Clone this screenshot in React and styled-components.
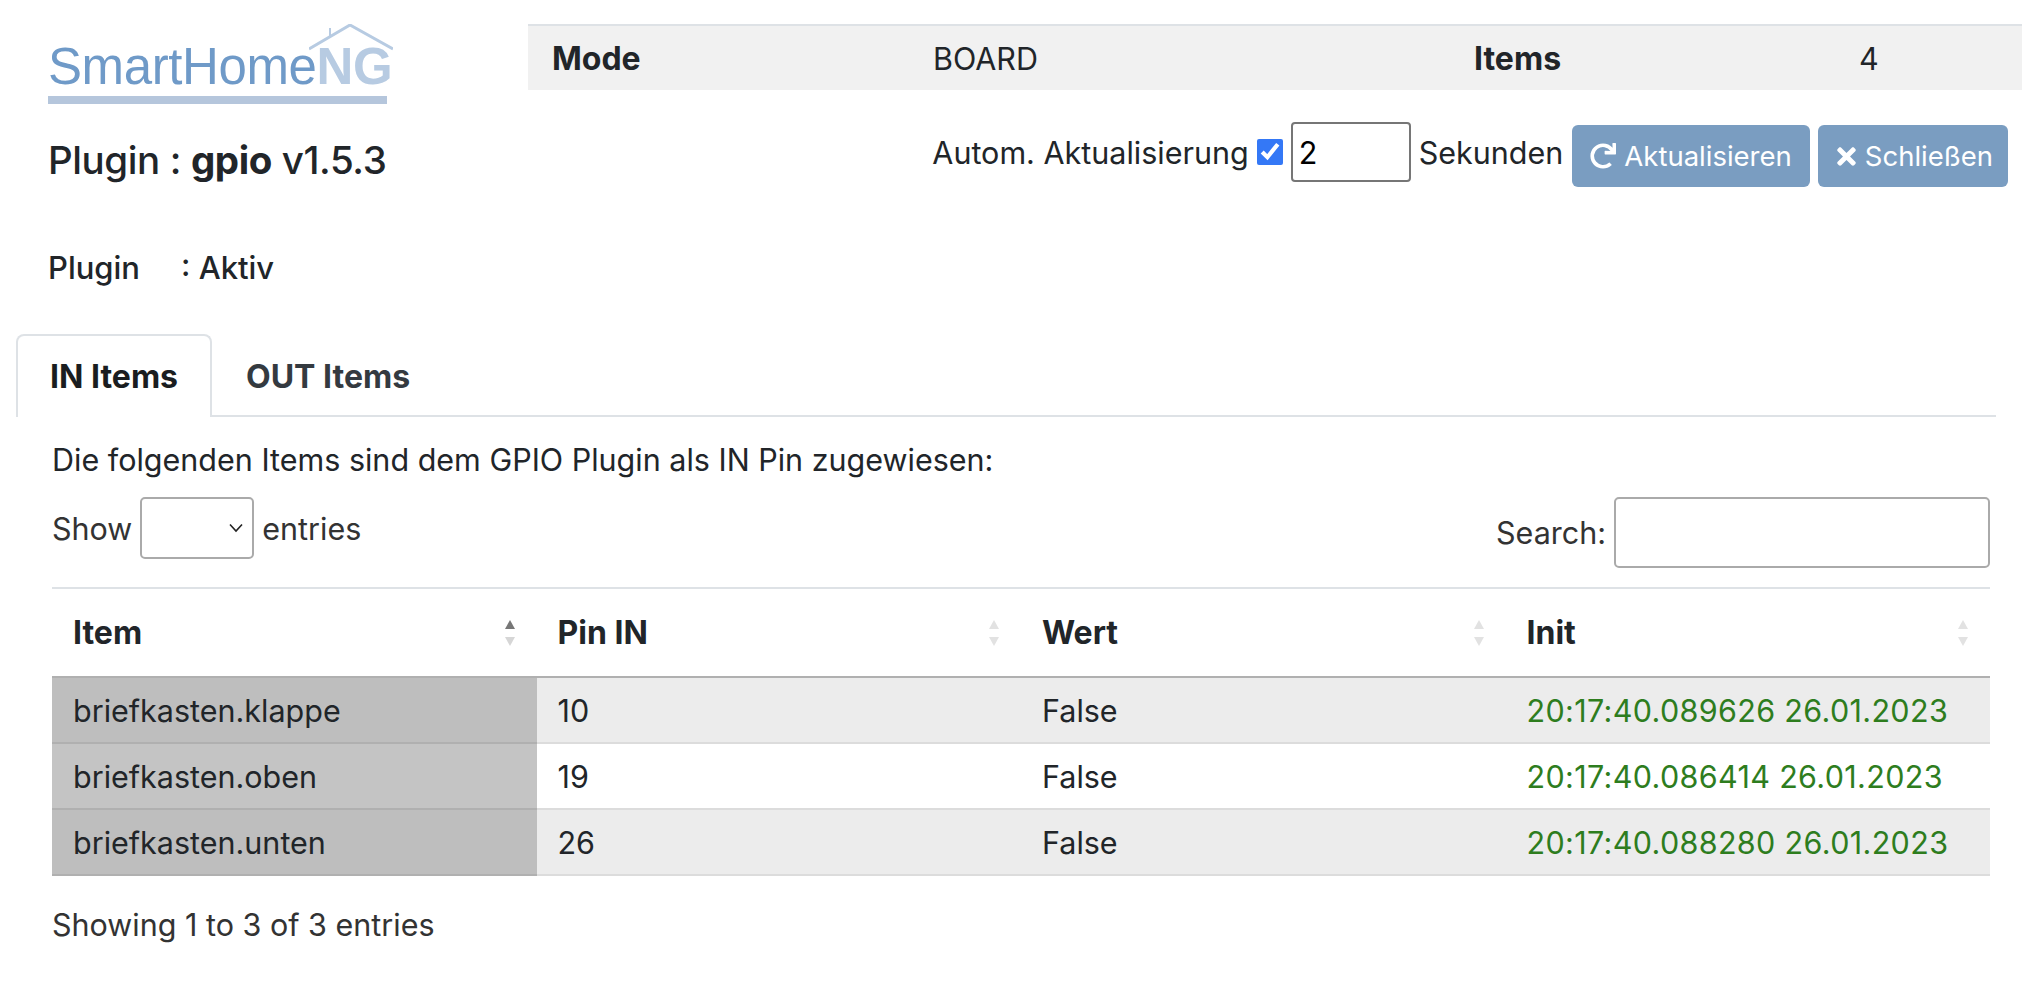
import styled, { createGlobalStyle } from "styled-components";
import { FaRedo, FaTimes } from "react-icons/fa";

const GlobalStyle = createGlobalStyle`
  html, body {
    margin: 0;
    background: #fff;
  }
  body {
    font-family: Inter, "Liberation Sans", sans-serif;
    font-size: 30.5px;
    color: #212529;
  }
`;

const Page = styled.div`
  width: 2022px;
  height: 984px;
  overflow: hidden;
`;

const Header = styled.div`
  display: grid;
  grid-template-columns: 528px 1fr;
  padding-top: 24px;
`;

const Brand = styled.div`
  padding-left: 48px;
`;

const Logo = styled.div`
  position: relative;
  width: 345px;
  height: 80px;
  filter: blur(0.6px);
`;

const LogoText = styled.div`
  padding-top: 17px;
  font-family: "Liberation Sans", sans-serif;
  font-size: 51px;
  line-height: 51px;
  letter-spacing: -0.4px;
  color: #6f9ac8;
  white-space: nowrap;

  span {
    color: #b7cbe2;
    font-weight: 700;
  }
`;

const LogoBar = styled.div`
  width: 339px;
  height: 8px;
  margin-top: 4px;
  background: #b5c6dc;
`;

const LogoRoof = styled.svg`
  position: absolute;
  right: 0;
  top: 0;
`;

const PluginTitle = styled.h1`
  margin: 33px 0 0;
  font-size: 38.5px;
  font-weight: 500;
  line-height: 46px;
  letter-spacing: -0.4px;

  b {
    font-weight: 700;
  }
`;

const InfoTable = styled.div`
  display: grid;
  grid-template-columns: 381px 541px 385px 1fr;
  height: 64px;
  align-items: center;
  padding-left: 24px;
  background: #f1f1f1;
  border-top: 2px solid #dee2e6;
`;

const InfoCell = styled.div`
  font-weight: ${({ $bold }) => ($bold ? 700 : 400)};
  font-size: ${({ $bold }) => ($bold ? "32px" : "inherit")};
`;

const Controls = styled.div`
  display: flex;
  align-items: center;
  justify-content: flex-end;
  gap: 8px;
  height: 60px;
  margin-top: 32px;
  padding-right: 14px;
`;

const AutoCheck = styled.input`
  width: 26px;
  height: 26px;
  margin: 0;
  accent-color: #3478f6;
`;

const SecondsInput = styled.input`
  box-sizing: border-box;
  width: 120px;
  height: 60px;
  padding: 0 6px;
  border: 2px solid #767676;
  border-radius: 4px;
  font: 400 30.5px Inter, sans-serif;
  color: #000;
`;

const ActionButton = styled.button`
  display: flex;
  align-items: center;
  gap: ${({ $compact }) => ($compact ? "5px" : "8px")};
  height: 62px;
  margin-top: 8px;
  margin-left: ${({ $compact }) => ($compact ? "0" : "1px")};
  padding: 0 ${({ $compact }) => ($compact ? "15px" : "18px")};
  border: none;
  border-radius: 6px;
  background: #7a9dc1;
  color: #fff;
  font: 400 27.5px Inter, sans-serif;
`;

const StatusRow = styled.div`
  display: grid;
  grid-template-columns: 133px 1fr;
  padding: 63px 0 0 48px;
  font-size: 31px;
  line-height: 44px;
  font-weight: 500;
`;

const Tabs = styled.div`
  display: flex;
  width: 1980px;
  height: 83px;
  margin: 44px 0 0 16px;
  border-bottom: 2px solid #dee2e6;
  box-sizing: border-box;
`;

const Tab = styled.div`
  box-sizing: border-box;
  display: flex;
  align-items: center;
  height: 83px;
  padding: 0 32px;
  font-size: 32px;
  font-weight: 700;
  color: ${({ $active }) => ($active ? "#1a1d20" : "#343a40")};
  background: ${({ $active }) => ($active ? "#fff" : "transparent")};
  border: 2px solid ${({ $active }) => ($active ? "#dee2e6" : "transparent")};
  border-bottom: none;
  border-radius: 8px 8px 0 0;
`;

const TabPane = styled.div`
  width: 1938px;
  margin-left: 52px;
`;

const Lead = styled.p`
  margin: 0;
  padding-top: 21px;
  line-height: 44px;
`;

const TableTools = styled.div`
  display: flex;
  justify-content: space-between;
  margin-top: 15px;
  height: 90px;
  color: #333;
`;

const ToolGroup = styled.label`
  display: flex;
  align-items: center;
  gap: 8px;
  height: ${({ $tall }) => ($tall ? "71px" : "62px")};
`;

const LengthSelect = styled.div`
  box-sizing: border-box;
  display: flex;
  align-items: center;
  justify-content: flex-end;
  width: 114px;
  height: 62px;
  padding-right: 8px;
  border: 2px solid #aaa;
  border-radius: 5px;
`;

const SearchBox = styled.input`
  box-sizing: border-box;
  width: 376px;
  height: 71px;
  border: 2px solid #aaa;
  border-radius: 5px;
`;

const DataTable = styled.table`
  width: 100%;
  table-layout: fixed;
  border-collapse: collapse;
  border-top: 2px solid #dee2e6;
`;

const HeadCell = styled.th`
  height: 87px;
  padding: 0 21px;
  text-align: left;
  font-size: 32px;
  font-weight: 700;
  border-bottom: 2px solid #b0b0b0;
`;

const HeadInner = styled.div`
  display: flex;
  align-items: center;
  justify-content: space-between;
`;

const BodyCell = styled.td`
  box-sizing: border-box;
  height: 66px;
  padding: 0 21px;
  background: ${({ $odd }) => ($odd ? "#ececec" : "#fff")};
  border-bottom: 2px solid #dcdcdc;
  color: ${({ $green }) => ($green ? "#2e7d1e" : "inherit")};
  letter-spacing: ${({ $green }) => ($green ? "0.35px" : "0")};
`;

const KeyCell = styled(BodyCell)`
  background: ${({ $odd }) => ($odd ? "#bebebe" : "#c4c4c4")};
  border-bottom-color: #b0b0b0;
`;

const Info = styled.div`
  margin-top: 27px;
  line-height: 44px;
  color: #333;
`;

const SortIcon = ({ active }) => (
  <svg width="12" height="30" viewBox="0 0 12 30">
    <path d="M6 2 L11 11 L1 11 Z" fill={active ? "#777" : "#e2e2e2"} />
    <path d="M6 28 L11 19 L1 19 Z" fill={active ? "#d6d6d6" : "#e2e2e2"} />
  </svg>
);

const columns = ["Item", "Pin IN", "Wert", "Init"];

const rows = [
  ["briefkasten.klappe", "10", "False", "20:17:40.089626 26.01.2023"],
  ["briefkasten.oben", "19", "False", "20:17:40.086414 26.01.2023"],
  ["briefkasten.unten", "26", "False", "20:17:40.088280 26.01.2023"],
];

const App = () => (
  <Page>
    <GlobalStyle />
    <Header>
      <Brand>
        <Logo>
          <LogoRoof width="84" height="28" viewBox="0 0 84 28" fill="none" stroke="#b7cbe2" strokeWidth="3">
            <path d="M0 25 L41 1 L84 25" />
            <path d="M21 12 V4" strokeWidth="2" />
          </LogoRoof>
          <LogoText>
            SmartHome<span>NG</span>
          </LogoText>
          <LogoBar />
        </Logo>
        <PluginTitle>
          Plugin : <b>gpio</b> v1.5.3
        </PluginTitle>
      </Brand>
      <div>
        <InfoTable>
          <InfoCell $bold>Mode</InfoCell>
          <InfoCell>BOARD</InfoCell>
          <InfoCell $bold>Items</InfoCell>
          <InfoCell>4</InfoCell>
        </InfoTable>
        <Controls>
          <span>Autom. Aktualisierung</span>
          <AutoCheck type="checkbox" defaultChecked />
          <SecondsInput defaultValue="2" />
          <span>Sekunden</span>
          <ActionButton>
            <FaRedo size={26} />
            Aktualisieren
          </ActionButton>
          <ActionButton $compact>
            <FaTimes size={27} />
            Schließen
          </ActionButton>
        </Controls>
      </div>
    </Header>
    <StatusRow>
      <span>Plugin</span>
      <span>: Aktiv</span>
    </StatusRow>
    <Tabs>
      <Tab $active>IN Items</Tab>
      <Tab>OUT Items</Tab>
    </Tabs>
    <TabPane>
      <Lead>Die folgenden Items sind dem GPIO Plugin als IN Pin zugewiesen:</Lead>
      <TableTools>
        <ToolGroup>
          Show
          <LengthSelect>
            <svg width="16" height="10" viewBox="0 0 16 10" fill="none" stroke="#222" strokeWidth="1.6">
              <path d="M2 1.5 L8 8 L14 1.5" />
            </svg>
          </LengthSelect>
          entries
        </ToolGroup>
        <ToolGroup $tall>
          Search:
          <SearchBox />
        </ToolGroup>
      </TableTools>
      <DataTable>
        <thead>
          <tr>
            {columns.map((name, i) => (
              <HeadCell key={name}>
                <HeadInner>
                  {name}
                  <SortIcon active={i === 0} />
                </HeadInner>
              </HeadCell>
            ))}
          </tr>
        </thead>
        <tbody>
          {rows.map((row, r) => (
            <tr key={row[0]}>
              <KeyCell $odd={r % 2 === 0}>{row[0]}</KeyCell>
              <BodyCell $odd={r % 2 === 0}>{row[1]}</BodyCell>
              <BodyCell $odd={r % 2 === 0}>{row[2]}</BodyCell>
              <BodyCell $odd={r % 2 === 0} $green>{row[3]}</BodyCell>
            </tr>
          ))}
        </tbody>
      </DataTable>
      <Info>Showing 1 to 3 of 3 entries</Info>
    </TabPane>
  </Page>
);

export default App;
